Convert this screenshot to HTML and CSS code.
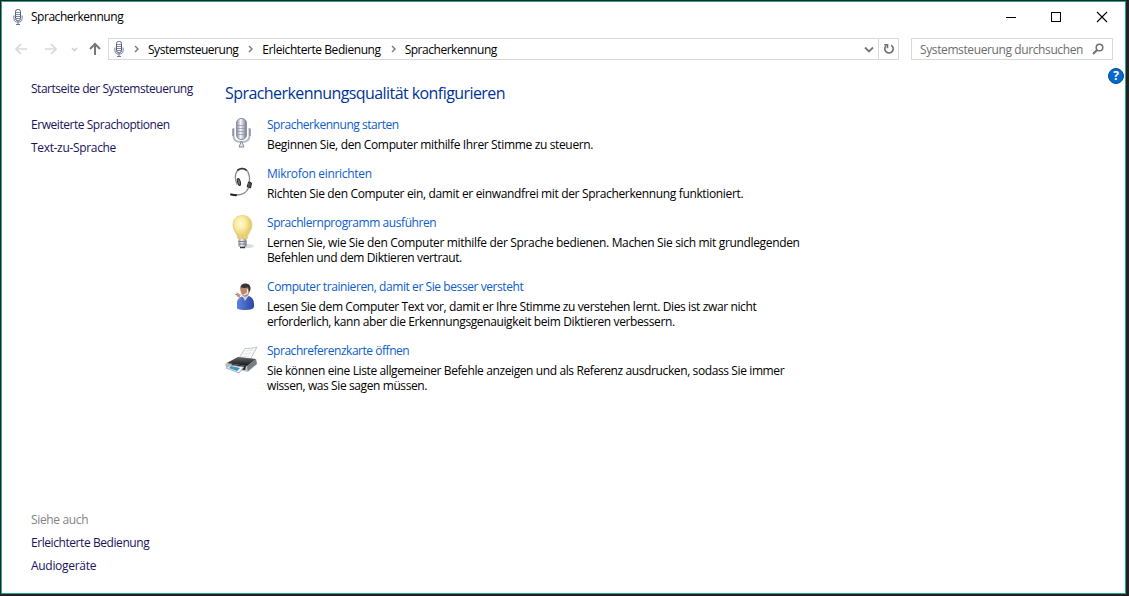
FILE: index.html
```
<!DOCTYPE html>
<html lang="de">
<head>
<meta charset="utf-8">
<title>Spracherkennung</title>
<link rel="stylesheet" href="styles.css">
</head>
<body>
<svg class="defs" width="0" height="0">
  <defs>
    <linearGradient id="silver"><stop offset="0" stop-color="#8488a0"/><stop offset=".4" stop-color="#f4f5fc"/><stop offset="1" stop-color="#74788e"/></linearGradient>
    <radialGradient id="glow" cx=".4" cy=".35"><stop offset="0" stop-color="#fffbd5"/><stop offset=".6" stop-color="#fae99b"/><stop offset="1" stop-color="#e6cc70"/></radialGradient>
    <linearGradient id="shirt"><stop offset="0" stop-color="#5f82dc"/><stop offset="1" stop-color="#2b47a0"/></linearGradient>
    <linearGradient id="printer" x2="0" y2="1"><stop offset="0" stop-color="#666"/><stop offset="1" stop-color="#151515"/></linearGradient>
    <symbol id="mic" viewBox="0 0 10 17">
      <path d="M.8 6.500v3.200Q1 12.500 3.300 13h3.400Q9 12.500 9.200 9.700V6.500" fill="#e4e6f1" stroke="#858ba7"/>
      <rect x="2.500" y=".5" width="5" height="11" rx="2" fill="#fff" stroke="#59617f"/>
      <path d="M3 3.500h4M3 5.500h4M3 7.500h4M3 9.500h4" stroke="#8389a7"/>
      <path d="M5 12v3M3 15.500h4" stroke="#6e7594"/>
    </symbol>
  </defs>
</svg>
<div class="window">
  <header class="titlebar">
    <svg class="mic" width="10" height="17"><use href="#mic"/></svg>
    <span class="title">Spracherkennung</span>
    <svg class="controls" width="102" height="13" fill="none" stroke="#000" shape-rendering="crispEdges">
      <path d="M0 6.500h10M45.500 1.500h9v9h-9z"/>
      <path d="M91 1l10 10M101 1L91 11" shape-rendering="auto" stroke-width="1.100"/>
    </svg>
  </header>
  <nav class="toolbar">
    <svg class="arrows" width="90" height="16" fill="none" stroke-width="1.700">
      <path d="M13 8H2M7 3L2 8l5 5M31 8h11M37 3l5 5-5 5" stroke="#d9d9d9"/>
      <path d="M58 7l2.500 2.500L63 7" stroke="#d0d0d0"/>
      <path d="M81 14V3M76 8l5-5 5 5" stroke="#777" stroke-width="2"/>
    </svg>
    <div class="address">
      <svg class="mic" width="10" height="17"><use href="#mic"/></svg>
      <svg class="chev" width="6" height="8"><path d="M1 1l3 3-3 3"/></svg>
      <span class="crumb c-system">Systemsteuerung</span>
      <svg class="chev" width="6" height="8"><path d="M1 1l3 3-3 3"/></svg>
      <span class="crumb c-ease">Erleichterte Bedienung</span>
      <svg class="chev" width="6" height="8"><path d="M1 1l3 3-3 3"/></svg>
      <span class="crumb c-speech">Spracherkennung</span>
      <svg class="drop" width="10" height="8"><path d="M1 1.500l4 4 4-4"/></svg>
      <div class="refresh">
        <svg width="12" height="12" fill="none" stroke="#6f6f6f" stroke-width="1.600"><path d="M8.200 2.200A4.200 4.200 0 1 1 3 2.800"/><path d="M1.200 1.800h3.300v3.400"/></svg>
      </div>
    </div>
    <div class="search">
      <span class="query">Systemsteuerung durchsuchen</span>
      <svg width="12" height="12" fill="none" stroke="#707070"><circle cx="7.500" cy="4.500" r="3.300" stroke-width="1.500"/><path d="M5 7l-4 4" stroke-width="2"/></svg>
    </div>
  </nav>
  <div class="content">
    <aside class="sidebar">
      <a class="s-home">Startseite der Systemsteuerung</a>
      <a class="s-options">Erweiterte Sprachoptionen</a>
      <a class="s-tts">Text-zu-Sprache</a>
      <span class="also">Siehe auch</span>
      <a class="s-ease">Erleichterte Bedienung</a>
      <a class="s-audio">Audiogeräte</a>
    </aside>
    <main>
      <h1>Spracherkennungsqualität konfigurieren</h1>
      <section class="task">
        <svg width="32" height="34" fill="none">
          <path d="M8.500 11v8q0 6 8 6t8-6v-8" stroke="#b5b8c6" stroke-width="2"/>
          <path d="M8 12v7M25 12v7" stroke="#707586"/>
          <rect x="11.500" y="1.500" width="10" height="21" rx="4.500" fill="url(#silver)" stroke="#8c90a3"/>
          <path d="M12 8.500h9M12 11.500h9M12 14.500h9M12 17.500h9" stroke="#8b8fa2" stroke-width=".7"/>
          <path d="M16.500 24l-2.500 6h5z" fill="#e8e9ef" stroke="#85899a"/>
        </svg>
        <div><a class="l1">Spracherkennung starten</a><p><span class="d1">Beginnen Sie, den Computer mithilfe Ihrer Stimme zu steuern.</span></p></div>
      </section>
      <section class="task">
        <svg width="32" height="34" fill="none" stroke-linecap="round">
          <path d="M12 18C8.500 10 11 3 17 2.500c6 0 8 6 7.500 13" stroke="#8f8f8f" stroke-width="1.400"/>
          <path d="M13 4q4-3 8 0" stroke="#333" stroke-width="1.600"/>
          <ellipse cx="14" cy="16" rx="1.300" ry="3.600" fill="#777" stroke="#292929" transform="rotate(-14 14 16)"/>
          <path d="M24 16l2.500 1-1 5-3-1z" fill="#4d4d4d" stroke="#222"/>
          <path d="M23.500 22c-2 5-7 7-13 7" stroke="#888" stroke-width="1.300"/>
          <path d="M6 28.500l5 .7" stroke="#222" stroke-width="2"/>
        </svg>
        <div><a class="l2">Mikrofon einrichten</a><p><span class="d2">Richten Sie den Computer ein, damit er einwandfrei mit der Spracherkennung funktioniert.</span></p></div>
      </section>
      <section class="task">
        <svg width="32" height="35">
          <ellipse cx="22" cy="31" rx="7" ry="2" fill="#ddd"/>
          <path d="M17.500.5C11 .5 8 5 8 10c0 6 4.500 8 5 14h9c.5-6 5-8 5-14 0-5-3-9.500-9.500-9.500z" fill="url(#glow)" stroke="#dfcd7e" stroke-width=".7"/>
          <path d="M15.500 23l-1-9 3 2 3-2-1 9" fill="none" stroke="#f0dc8a" stroke-width=".7"/>
          <rect x="13.500" y="24" width="8" height="8" rx="1.500" fill="url(#silver)"/>
          <path d="M13.500 26.500h8M13.500 29h8" stroke="#7b8081"/>
          <path d="M15 32.500h5" stroke="#333" stroke-width="1.500"/>
        </svg>
        <div><a class="l3">Sprachlernprogramm ausführen</a><p><span class="d3">Lernen Sie, wie Sie den Computer mithilfe der Sprache bedienen. Machen Sie sich mit grundlegenden</span><span class="d4">Befehlen und dem Diktieren vertraut.</span></p></div>
      </section>
      <section class="task">
        <svg class="person" width="32" height="30">
          <path d="M12 26.500v-6q0-4 4.500-6L20 16l4-2q5 2 5 8v3q-1 3-8 3-6 0-9-1.500z" fill="url(#shirt)"/>
          <path d="M17 13l3 6 4-6z" fill="#c5d5fb"/>
          <path d="M15 6q1-4 5-3.500T24.500 8q0 6-4.500 7-4-1-5-9z" fill="#bd8868"/>
          <path d="M15.500 5q1-4 5.500-3.500 5 .5 4.500 6l-1.500 3-1-5q-5 1-7.500-.5z" fill="#34323a"/>
          <path d="M22.500 7v4q-2 2-4 1.500M12.500 11.500l4 1.500" fill="none" stroke="#ecebed" stroke-width="1.300"/>
          <path d="M11.500 10l4 3-1 3-3-2z" fill="#c89472"/>
          <path d="M10 12.500h3M13.500 17h2" stroke="#839de4"/>
        </svg>
        <div><a class="l4">Computer trainieren, damit er Sie besser versteht</a><p><span class="d5">Lesen Sie dem Computer Text vor, damit er Ihre Stimme zu verstehen lernt. Dies ist zwar nicht</span><span class="d6">erforderlich, kann aber die Erkennungsgenauigkeit beim Diktieren verbessern.</span></p></div>
      </section>
      <section class="task">
        <svg class="printer" width="34" height="30">
          <path d="M14 11L20 1.500q5 .5 12-1.500l-7 13z" fill="#f8f9fa" stroke="#b3b8be" stroke-width=".8"/>
          <path d="M21 4l7-1M19 7l7-1M17 10l7-1" stroke="#e2e4e6"/>
          <path d="M0 17l13-7 18 2 1 5-9 8L1 20z" fill="#b9bdc2"/>
          <path d="M2 16l11-6 18 2-9 7z" fill="url(#printer)"/>
          <path d="M22 19l9-7 .8 5-9 7z" fill="#777d84"/>
          <path d="M7 17l14 2-1 4-15-2z" fill="#222"/>
          <path d="M5 18l14 2-5 6L1 21z" fill="#e9f1f9" stroke="#89959f" stroke-width=".7"/>
          <path d="M6 19l9 2-3 3-8-3z" fill="#3b91c7"/>
          <path d="M7 20l3 1-2 1z" fill="#65b64b"/>
        </svg>
        <div><a class="l5">Sprachreferenzkarte öffnen</a><p><span class="d7">Sie können eine Liste allgemeiner Befehle anzeigen und als Referenz ausdrucken, sodass Sie immer</span><span class="d8">wissen, was Sie sagen müssen.</span></p></div>
      </section>
    </main>
    <div class="help">?</div>
  </div>
</div>
</body>
</html>
```
FILE: styles.css
```
* { box-sizing: border-box; }
body { margin: 0; padding: 1px; width: 1129px; height: 596px; overflow: hidden; background: #202123; font: 12px/15px "Open Sans", "Noto Sans", sans-serif; color: #000; letter-spacing: -.4px; }
.defs { position: absolute; }
.window { width: 1125px; height: 593px; border: 1px solid #25a58c; background: #fff; display: flex; flex-direction: column; }
.titlebar { height: 30px; flex: none; padding: 0 17px 0 11px; display: flex; align-items: center; }
.title { margin: -1px 0 0 8px; letter-spacing: -.47px; }
.controls { margin-left: auto; }
.toolbar { height: 22px; margin-top: 6px; flex: none; padding: 0 12px 0 12px; display: flex; align-items: center; }
.arrows { margin-right: 4px; }
.address { width: 791px; height: 22px; border: 1px solid #d9d9d9; padding-left: 5px; display: flex; align-items: center; }
.chev { margin: 0 8px 0 10px; fill: none; stroke: #777; stroke-width: 1.4; }
.crumb { white-space: nowrap; }
.c-system, .c-speech { letter-spacing: -.47px; }
.c-ease, .s-ease { letter-spacing: -.43px; }
.drop { margin: 2px 4px 0 auto; fill: none; stroke: #777; stroke-width: 1.8; }
.refresh { width: 20px; height: 20px; border-left: 1px solid #d9d9d9; display: flex; align-items: center; justify-content: center; }
.search { width: 202px; height: 22px; margin-left: auto; border: 1px solid #d9d9d9; padding: 0 8px; display: flex; align-items: center; justify-content: space-between; color: #6d6d6d; }
.query { white-space: nowrap; letter-spacing: -.39px; }
.content { flex: 1; display: flex; }
.sidebar { width: 223px; padding: 21px 0 20px 29px; display: flex; flex-direction: column; color: #19135c; white-space: nowrap; align-items: flex-start; }
.s-home { letter-spacing: -.47px; }
.s-options { margin-top: 21px; letter-spacing: -.45px; }
.s-tts { margin-top: 8px; letter-spacing: -.33px; }
.also { margin-top: auto; color: #838383; letter-spacing: -.35px; }
.s-ease, .s-audio { margin-top: 8px; }
.s-audio { letter-spacing: -.3px; }
main { width: 620px; padding-top: 22px; white-space: nowrap; }
h1 { margin: 0 0 13px; font-size: 16px; line-height: 22px; font-weight: 400; color: #003399; letter-spacing: -.57px; width: max-content; }
.task { display: flex; gap: 10px; margin-bottom: 14px; }
.task > svg { flex: none; height: 35px; margin-bottom: -35px; overflow: visible; }
.task a { display: block; width: max-content; color: #0d5dca; }
.task p { margin: 5px 0 0; }
.task p span { display: block; width: max-content; }
.task .person { margin-top: 3px; }
.task .printer { margin-right: -2px; margin-top: 4px; }
.l1 { letter-spacing: -.46px; }
.l2 { letter-spacing: -.3px; }
.l3, .l4 { letter-spacing: -.42px; }
.l5 { letter-spacing: -.47px; }
.d1, .d2 { letter-spacing: -.35px; }
.d3 { letter-spacing: -.335px; }
.d4, .d7 { letter-spacing: -.39px; }
.d5, .d6 { letter-spacing: -.383px; }
.d8 { letter-spacing: -.4px; }
.help { width: 16px; height: 16px; margin: 8px 1px 0 auto; border: 1px solid #064b96; border-radius: 50%; background: #0868cc; color: #fff; font-weight: 700; line-height: 14px; text-align: center; letter-spacing: 0; }
```
